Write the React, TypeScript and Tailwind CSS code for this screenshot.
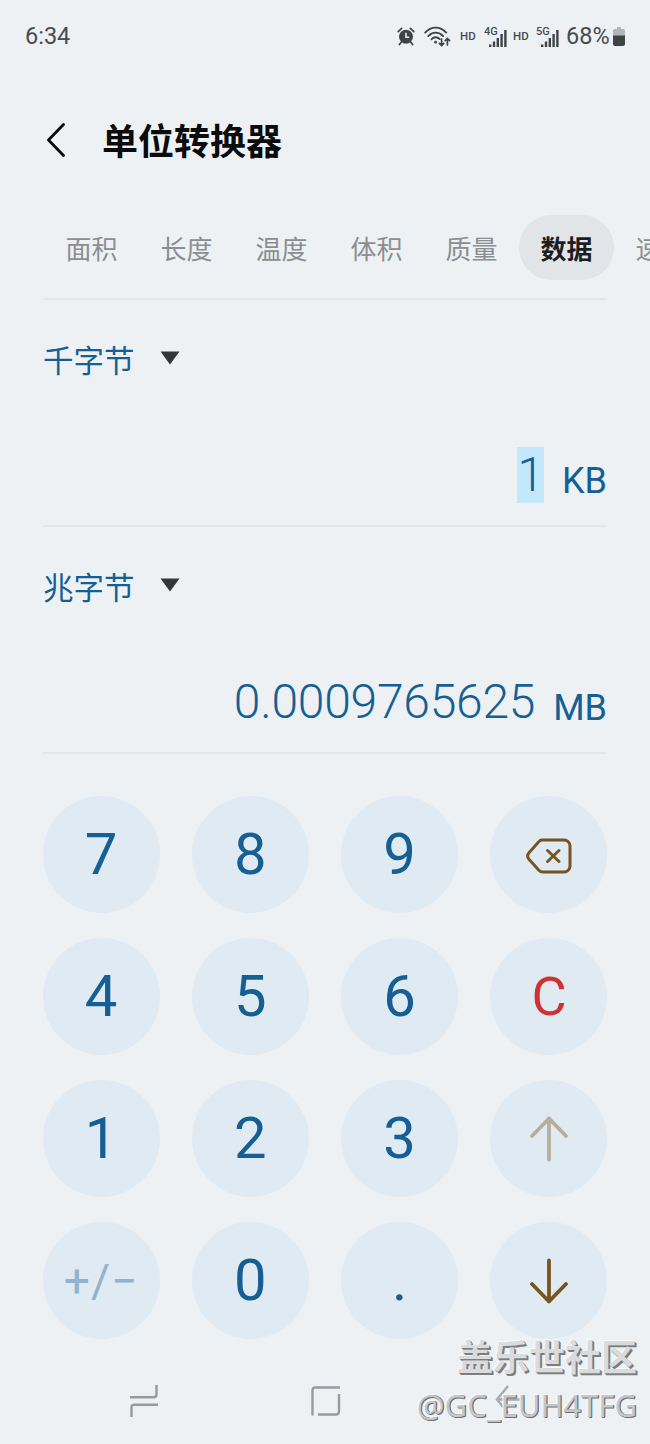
import React, { useState } from 'react';

const TABS = ['面积', '长度', '温度', '体积', '质量', '数据', '速度'];

const KEYS = [
  '7', '8', '9', 'delete',
  '4', '5', '6', 'C',
  '1', '2', '3', 'up',
  'sign', '0', '.', 'down',
];

function AlarmIcon() {
  return (
    <svg width="18" height="19" viewBox="0 0 18 19" fill="none">
      <circle cx="9" cy="9.8" r="7" fill="#3f4446" />
      <path d="M1.2 4.6 4.6 1.4M16.8 4.6 13.4 1.4M4.2 15.2 2.4 17.6M13.8 15.2l1.8 2.4" stroke="#3f4446" strokeWidth="1.7" strokeLinecap="round" />
      <path d="M9 5.8v4.4h3.2" stroke="#edf1f4" strokeWidth="1.6" />
    </svg>
  );
}

function WifiIcon() {
  return (
    <svg width="27" height="21" viewBox="0 0 27 21" fill="none" stroke="#3f4446" strokeLinecap="round">
      <path d="M1.2 6.6C7.2-.1 16.2-.1 22.2 6.6" strokeWidth="1.9" />
      <path d="M4.3 10.1c4.2-4.6 10.6-4.6 14.8 0" strokeWidth="1.9" />
      <path d="M7.6 13.2c2.4-2.5 5.8-2.5 8.2-.1" strokeWidth="1.9" />
      <circle cx="11.6" cy="16.2" r="1.4" fill="#3f4446" stroke="none" />
      <path d="M17.6 13v6.400M15.400 17.400l2.200 2.200 2.200-2.200M23.400 19v-6.400M21.200 14.600l2.200-2.200 2.200 2.200" strokeWidth="1.700" />
    </svg>
  );
}

function Signal({ label }: { label: string }) {
  return (
    <div className="relative h-[20px] w-[24px]">
      <span className="absolute -top-px left-0 text-[11px] leading-[11px] font-medium">{label}</span>
      <svg className="absolute bottom-0 left-[5px]" width="18" height="18" viewBox="0 0 18 18" fill="#3f4446">
        <rect x="0" y="15.500" width="2.400" height="2.500" />
        <rect x="3.800" y="12.500" width="2.400" height="5.500" />
        <rect x="7.600" y="9" width="2.400" height="9" />
        <rect x="11.400" y="5" width="2.400" height="13" />
        <rect x="15.200" y="1" width="2.400" height="17" />
      </svg>
    </div>
  );
}

function BatteryIcon() {
  return (
    <svg width="12" height="19" viewBox="0 0 12 19">
      <path d="M4 0h4v2h2.200A1.800 1.800 0 0 1 12 3.800V9H0V3.800A1.800 1.800 0 0 1 1.800 2H4z" fill="#b3b6b8" />
      <path d="M0 8.500h12v8.500a2 2 0 0 1-2 2H2a2 2 0 0 1-2-2z" fill="#3f4446" />
    </svg>
  );
}

function StatusBar() {
  return (
    <div className="flex h-[73px] shrink-0 items-center pr-[25px] pl-[25px] text-[#484c4f]">
      <span className="text-[23.500px] leading-none">6:34</span>
      <div className="ml-auto flex items-center">
        <AlarmIcon />
        <div className="ml-[9px]"><WifiIcon /></div>
        <span className="ml-[9px] w-[17px] text-[11.500px] leading-none font-medium">HD</span>
        <div className="ml-[7px]"><Signal label="4G" /></div>
        <span className="ml-[5px] w-[17px] text-[11.500px] leading-none font-medium">HD</span>
        <div className="ml-[6px]"><Signal label="5G" /></div>
        <span className="ml-[6px] w-[44px] text-[23.500px] leading-none">68%</span>
        <div className="ml-[3px]"><BatteryIcon /></div>
      </div>
    </div>
  );
}

interface UnitPanelProps {
  unit: string;
  value: string;
  symbol: string;
  selected?: boolean;
}

function UnitPanel({ unit, value, symbol, selected }: UnitPanelProps) {
  return (
    <section className="mx-[43px] flex h-[227px] shrink-0 flex-col border-b-2 border-[#e4e7ea] pt-[38px] text-[#155f95]">
      <button className="flex h-[44px] items-center gap-[25px] self-start">
        <span className="pt-1 text-[30.500px] leading-[44px]">{unit}</span>
        <svg className="-mt-1" width="20" height="14" viewBox="0 0 20 14" fill="#333638">
          <path d="M.5.5h19L10 13.500z" />
        </svg>
      </button>
      <div className="mt-[65px] flex items-end justify-end gap-[18px]">
        <span
          className={`text-[48px] leading-[56px] font-light tracking-[-0.25px] ${
            selected ? 'bg-[#c3e8fb] pl-px' : ''
          }`}
        >
          {value}
        </span>
        <span className="pb-px text-[36px] leading-[42px]">{symbol}</span>
      </div>
    </section>
  );
}

function KeyLabel({ name }: { name: string }) {
  switch (name) {
    case 'delete':
      return (
        <svg className="mt-[3px]" width="46" height="36" viewBox="0 0 46 36" fill="none" stroke="#775521" strokeWidth="3" strokeLinecap="round" strokeLinejoin="round">
          <path d="M15.500 2H38a6 6 0 0 1 6 6v20a6 6 0 0 1-6 6H16.500c-1.500 0-2.400-.500-3.400-1.500L3.200 21.500c-2-2.200-2-4.800 0-7L13 3.600C13.800 2.600 14.500 2 15.500 2z" />
          <path d="m21.500 12.500 11.500 11M33 12.500l-11.500 11" />
        </svg>
      );
    case 'up':
      return (
        <svg width="40" height="46" viewBox="0 0 40 46" fill="none" stroke="#b8ad9c" strokeWidth="3.800" strokeLinecap="round" strokeLinejoin="round">
          <path d="M20 43.500V2.500M3 20 20 2.500 37 20" />
        </svg>
      );
    case 'down':
      return (
        <svg width="40" height="46" viewBox="0 0 40 46" fill="none" stroke="#775521" strokeWidth="3.800" strokeLinecap="round" strokeLinejoin="round">
          <path d="M20 2.500v41M3 26l17 17.500L37 26" />
        </svg>
      );
    case 'C':
      return <span className="text-[54px] leading-[60px] text-[#cf332f]">C</span>;
    case 'sign':
      return <span className="text-[46px] leading-[52px] tracking-[1px] text-[#8fb3d0]">+/−</span>;
    default:
      return <span className="-mt-px text-[58px] leading-[68px]">{name}</span>;
  }
}

function NavBar() {
  return (
    <nav className="mt-auto flex h-[87px] shrink-0 items-center pl-[130px]">
      <svg width="28" height="32" viewBox="0 0 28 32" fill="none" stroke="#979b9e" strokeWidth="2.400">
        <path d="M0 12.300h23.500q3 0 3-3V0M28 19.700H4.500q-3 0-3 3V32" />
      </svg>
      <svg className="ml-[153px]" width="30" height="30" viewBox="0 0 30 30" fill="none" stroke="#979b9e" strokeWidth="2.400">
        <path d="M1.500 29.500V4.500q0-3 3-3H29M28 8v17q0 3.500-3 3.500H7" />
      </svg>
      <svg className="-mt-[2px] ml-[154px]" width="26" height="30" viewBox="0 0 26 30" fill="none" stroke="#a6aaad" strokeWidth="2.400">
        <path d="M13 1 2 14.500 13 28M2 14.500h24" />
      </svg>
    </nav>
  );
}

function App() {
  const [active, setActive] = useState('数据');

  return (
    <div className="relative flex h-[1444px] w-[650px] flex-col overflow-hidden bg-[#edf1f4] font-[Roboto,'Noto_Sans_CJK_SC',sans-serif]">
      <StatusBar />

      <header className="flex h-[134px] shrink-0 items-center pl-[46px]">
        <svg width="20" height="34" viewBox="0 0 20 34" fill="none" stroke="#0b0b0b" strokeWidth="2.800" strokeLinecap="round" strokeLinejoin="round">
          <path d="M17.500 1.500 2.500 17l15 15.500" />
        </svg>
        <h1 className="ml-[36px] pt-[5px] text-[36px] leading-[52px] font-bold text-[#0b0b0b]">单位转换器</h1>
      </header>

      {/* Category tabs run off the right edge */}
      <div className="mt-[8px] ml-[44px] flex h-[65px] shrink-0">
        {TABS.map((tab) => (
          <button
            key={tab}
            onClick={() => setActive(tab)}
            className={`h-full w-[95px] shrink-0 rounded-full pt-[5px] text-[26px] ${
              tab === active ? 'bg-[#e1e5e7] font-bold text-[#1b1d1e]' : 'text-[#8b8e90]'
            }`}
          >
            {tab}
          </button>
        ))}
      </div>
      <div className="mx-[43px] mt-[18px] h-[2px] shrink-0 bg-[#e4e7ea]" />

      <UnitPanel unit="千字节" value="1" symbol="KB" selected />
      <UnitPanel unit="兆字节" value="0.0009765625" symbol="MB" />

      <div className="mx-[42.500px] mt-[42px] grid shrink-0 grid-cols-[repeat(4,117px)] justify-between gap-y-[25px]">
        {KEYS.map((key) => (
          <button key={key} className="flex h-[117px] items-center justify-center rounded-full bg-[#e0eaf2] text-[#155f95]">
            <KeyLabel name={key} />
          </button>
        ))}
      </div>

      <NavBar />

      {/* Community watermark */}
      <div className="absolute right-[13px] bottom-[16px] flex flex-col items-end">
        <span className="text-[36px] leading-[45px] font-bold text-[#d9dbdc] [text-shadow:1px_1px_0_#7c7e80,2px_2px_0_#7c7e80,-1px_-1px_0_#fafafa]">盖乐世社区</span>
        <span className="font-['Noto_Sans',sans-serif] text-[31px] leading-[46px] text-[#c4c6c8] [text-shadow:1px_1px_0_#6c6e70,1px_0_0_#6c6e70,-1px_-1px_0_#fafafa]">@GC_EUH4TFG</span>
      </div>
    </div>
  );
}

export default App;
